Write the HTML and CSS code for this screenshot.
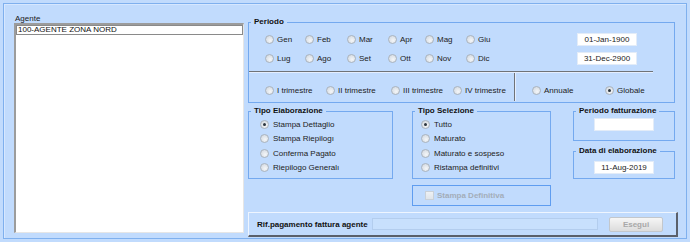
FILE: index.html
```html
<!DOCTYPE html>
<html>
<head>
<meta charset="utf-8">
<link rel="stylesheet" href="styles.css">
</head>
<body>
<div class="frame">
  <div class="left">
    <div class="lbl">Agente</div>
    <div class="listbox"><div class="item">100-AGENTE ZONA NORD</div></div>
  </div>
  <div class="right">
    <fieldset class="grp periodo">
      <legend>Periodo</legend>
      <div class="months">
        <label class="opt"><span class="radio"></span>Gen</label>
        <label class="opt"><span class="radio"></span>Feb</label>
        <label class="opt"><span class="radio"></span>Mar</label>
        <label class="opt"><span class="radio"></span>Apr</label>
        <label class="opt"><span class="radio"></span>Mag</label>
        <label class="opt"><span class="radio"></span>Giu</label>
        <div class="field">01-Jan-1900</div>
        <label class="opt"><span class="radio"></span>Lug</label>
        <label class="opt"><span class="radio"></span>Ago</label>
        <label class="opt"><span class="radio"></span>Set</label>
        <label class="opt"><span class="radio"></span>Ott</label>
        <label class="opt"><span class="radio"></span>Nov</label>
        <label class="opt"><span class="radio"></span>Dic</label>
        <div class="field">31-Dec-2900</div>
      </div>
      <div class="sep"></div>
      <div class="qrow">
        <div class="quarters">
          <label class="opt q1"><span class="radio"></span>I trimestre</label>
          <label class="opt q2"><span class="radio"></span>II trimestre</label>
          <label class="opt q3"><span class="radio"></span>III trimestre</label>
          <label class="opt"><span class="radio"></span>IV trimestre</label>
        </div>
        <div class="scope">
          <label class="opt annual"><span class="radio"></span>Annuale</label>
          <label class="opt"><span class="radio on"></span>Globale</label>
        </div>
      </div>
    </fieldset>
    <div class="mid">
      <fieldset class="grp elab">
        <legend>Tipo Elaborazione</legend>
        <div class="list">
          <label class="opt row"><span class="radio on"></span>Stampa Dettaglio</label>
          <label class="opt row"><span class="radio"></span>Stampa Riepilogı</label>
          <label class="opt row"><span class="radio"></span>Conferma Pagato</label>
          <label class="opt row"><span class="radio"></span>Riepilogo Generalı</label>
        </div>
      </fieldset>
      <div class="selcol">
        <fieldset class="grp sel">
          <legend>Tipo Selezione</legend>
          <div class="list">
            <label class="opt row"><span class="radio on"></span>Tutto</label>
            <label class="opt row"><span class="radio"></span>Maturato</label>
            <label class="opt row"><span class="radio"></span>Maturato e sospeso</label>
            <label class="opt row"><span class="radio"></span>Ristampa definitivi</label>
          </div>
        </fieldset>
        <div class="defbox"><span class="check"></span>Stampa Definitiva</div>
      </div>
      <div class="datecol">
        <fieldset class="grp small fatt">
          <legend>Periodo fatturazione</legend>
          <div class="field wide"></div>
        </fieldset>
        <fieldset class="grp small elabdate">
          <legend>Data di elaborazione</legend>
          <div class="field wide">11-Aug-2019</div>
        </fieldset>
      </div>
    </div>
    <div class="panel">
      <span class="plbl">Rif.pagamento fattura agente</span>
      <div class="pinput"></div>
      <div class="btn">Esegui</div>
    </div>
  </div>
</div>
</body>
</html>
```

FILE: styles.css
```css
html, body {
  margin: 0;
  padding: 0;
  background: #c1dbfd;
}
body {
  width: 690px;
  height: 242px;
  overflow: hidden;
  font-family: "Liberation Sans", Arial, sans-serif;
  font-size: 8px;
  color: #1a1a1a;
}
.frame {
  box-sizing: border-box;
  margin: 3px;
  width: 684px;
  height: 236px;
  border: 1px solid #7fb0ee;
  box-shadow: inset 1px 1px 0 #d6e7ff;
  display: flex;
  padding: 11px 0 0 10px;
}
.left {
  width: 230px;
  display: flex;
  flex-direction: column;
}
.lbl {
  height: 8px;
  line-height: 8px;
  padding-left: 1px;
  color: #202020;
}
.listbox {
  box-sizing: border-box;
  height: 210px;
  background: #fff;
  border-top: 2px solid #9c9c9c;
  border-left: 2px solid #9c9c9c;
  border-right: 1px solid #e6e6e6;
  border-bottom: 1px solid #e6e6e6;
}
.item {
  box-sizing: border-box;
  height: 10px;
  line-height: 8px;
  border: 1px solid #8a8a8a;
  padding-left: 1px;
  color: #111;
}
.right {
  margin-left: 4px;
  width: 430px;
  padding-top: 2px;
}
.grp {
  margin: 0;
  padding: 0;
  min-width: 0;
  box-sizing: border-box;
  border: 1px solid #74a9ef;
}
.grp legend {
  padding: 0 3px;
  margin-left: 2px;
  font-weight: bold;
  font-size: 8px;
  line-height: 10px;
  height: 10px;
  color: #111;
}
.periodo {
  width: 427px;
  height: 86px;
}
.months {
  margin-top: 6px;
  margin-left: 16px;
  display: grid;
  grid-template-columns: 40px 42px 41px 37px 41px 111px 60px;
  grid-auto-rows: 13px;
  row-gap: 6px;
}
.opt {
  display: flex;
  align-items: center;
  height: 13px;
  white-space: nowrap;
  color: #222;
}
.radio {
  box-sizing: border-box;
  width: 9px;
  height: 9px;
  border-radius: 50%;
  border: 1px solid #aab3bd;
  background: radial-gradient(circle at 60% 65%, #f4f6f8 0%, #dde2e8 60%, #cfd6de 100%);
  margin-right: 3px;
  flex: none;
  position: relative;
}
.radio.on::after {
  content: "";
  position: absolute;
  left: 2px;
  top: 2px;
  width: 3px;
  height: 3px;
  border-radius: 50%;
  background: #2b3540;
}
.field {
  box-sizing: border-box;
  width: 60px;
  height: 13px;
  background: #fff;
  border: 1px solid #e3ecf8;
  text-align: center;
  line-height: 11px;
  color: #222;
}
.sep {
  margin-top: 6px;
  width: 404px;
  height: 0;
  border-top: 1px solid #6f7378;
  border-bottom: 1px solid #e4eeff;
}
.qrow {
  display: flex;
  height: 28px;
}
.quarters {
  width: 266px;
  border-right: 1px solid #6f7378;
  display: flex;
  align-items: flex-end;
  padding: 0 0 4px 16px;
  box-sizing: border-box;
}
.q1 { width: 61px; }
.q2 { width: 65px; }
.q3 { width: 62px; }
.scope {
  display: flex;
  align-items: flex-end;
  padding: 0 0 4px 16px;
  border-left: 1px solid #e4eeff;
}
.annual { width: 73px; }
.mid {
  display: flex;
  margin-top: 3px;
  align-items: flex-start;
}
.elab {
  width: 145px;
  height: 73px;
}
.list {
  padding-top: 1px;
}
.elab .list { padding-left: 11px; }
.sel .list { padding-left: 8px; }
.opt.row {
  height: 14.5px;
}
.opt.row .radio { margin-right: 4px; }
.selcol {
  margin-left: 19px;
  width: 139px;
}
.sel {
  width: 139px;
  height: 73px;
}
.defbox {
  box-sizing: border-box;
  margin-top: 6px;
  height: 21px;
  border: 1px solid #5f9df0;
  display: flex;
  align-items: center;
  padding-left: 12px;
  font-weight: bold;
  color: #a3adb9;
}
.check {
  box-sizing: border-box;
  width: 9px;
  height: 9px;
  border: 1px solid #c9d0d8;
  background: linear-gradient(#eef1f4, #dfe4ea);
  margin-right: 3px;
}
.datecol {
  margin-left: 22px;
  width: 102px;
}
.small {
  width: 102px;
}
.fatt { height: 35px; }
.fatt .field { margin-top: 2px; }
.elabdate {
  height: 33px;
  margin-top: 5px;
}
.elabdate .field { margin-top: 5px; }
.field.wide {
  margin-left: 20px;
}
.panel {
  box-sizing: border-box;
  margin-top: 6px;
  width: 430px;
  height: 25px;
  border-top: 1px solid #eef5ff;
  border-left: 1px solid #eef5ff;
  border-right: 2px solid #5a606b;
  border-bottom: 2px solid #5a606b;
  display: flex;
  align-items: center;
  padding-left: 8px;
}
.plbl {
  width: 115px;
  font-weight: bold;
  color: #111;
  white-space: nowrap;
}
.pinput {
  box-sizing: border-box;
  width: 226px;
  height: 12px;
  background: #c8e0fd;
  border: 1px solid #b3cdee;
}
.btn {
  box-sizing: border-box;
  margin-left: 11px;
  width: 54px;
  height: 15px;
  border: 1px solid #c3c7cc;
  border-radius: 2px;
  background: linear-gradient(#f6f6f6, #dcdcdc);
  color: #a8a8a8;
  font-weight: bold;
  text-align: center;
  line-height: 13px;
}
```
